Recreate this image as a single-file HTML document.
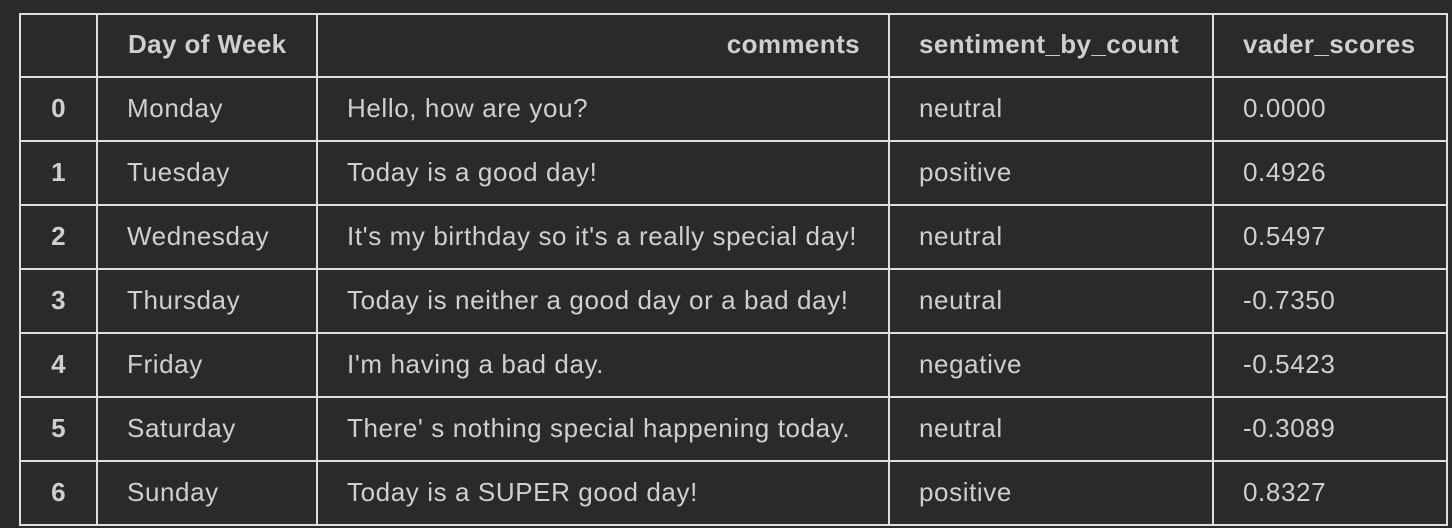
<!DOCTYPE html>
<html><head><style>
body{margin:0;background:#2a2a2a;width:1452px;height:528px;overflow:hidden;font-family:"Liberation Sans",sans-serif;color:#cfcfcf;}
.h{position:absolute;height:2px;background:#dedede;left:19px;width:1429px}
.v{position:absolute;width:2px;background:#dedede;top:13px;height:513px}
.t{position:absolute;font-size:26px;letter-spacing:0.6px;line-height:30px;white-space:nowrap}
.b{font-weight:bold;letter-spacing:0.4px}
.i{left:21px;width:75px;text-align:center}
</style></head><body>
<div class="h" style="top:13px"></div><div class="h" style="top:76px"></div><div class="h" style="top:140px"></div><div class="h" style="top:204px"></div><div class="h" style="top:268px"></div><div class="h" style="top:332px"></div><div class="h" style="top:396px"></div><div class="h" style="top:460px"></div><div class="h" style="top:524px"></div>
<div class="v" style="left:19px"></div><div class="v" style="left:96px"></div><div class="v" style="left:316px"></div><div class="v" style="left:888px"></div><div class="v" style="left:1212px"></div><div class="v" style="left:1446px"></div>
<div class="t b" style="left:128px;top:29px">Day of Week</div>
<div class="t b" style="right:592px;top:29px">comments</div>
<div class="t b" style="left:919px;top:29px">sentiment_by_count</div>
<div class="t b" style="left:1243px;top:29px">vader_scores</div>

<div class="t b i" style="top:93px">0</div><div class="t" style="left:127px;top:93px">Monday</div><div class="t" style="left:347px;top:93px">Hello, how are you?</div><div class="t" style="left:919px;top:93px">neutral</div><div class="t" style="left:1243px;top:93px">0.0000</div>
<div class="t b i" style="top:157px">1</div><div class="t" style="left:127px;top:157px">Tuesday</div><div class="t" style="left:347px;top:157px">Today is a good day!</div><div class="t" style="left:919px;top:157px">positive</div><div class="t" style="left:1243px;top:157px">0.4926</div>
<div class="t b i" style="top:221px">2</div><div class="t" style="left:127px;top:221px">Wednesday</div><div class="t" style="left:347px;top:221px">It's my birthday so it's a really special day!</div><div class="t" style="left:919px;top:221px">neutral</div><div class="t" style="left:1243px;top:221px">0.5497</div>
<div class="t b i" style="top:285px">3</div><div class="t" style="left:127px;top:285px">Thursday</div><div class="t" style="left:347px;top:285px">Today is neither a good day or a bad day!</div><div class="t" style="left:919px;top:285px">neutral</div><div class="t" style="left:1243px;top:285px">-0.7350</div>
<div class="t b i" style="top:349px">4</div><div class="t" style="left:127px;top:349px">Friday</div><div class="t" style="left:347px;top:349px">I'm having a bad day.</div><div class="t" style="left:919px;top:349px">negative</div><div class="t" style="left:1243px;top:349px">-0.5423</div>
<div class="t b i" style="top:413px">5</div><div class="t" style="left:127px;top:413px">Saturday</div><div class="t" style="left:347px;top:413px">There' s nothing special happening today.</div><div class="t" style="left:919px;top:413px">neutral</div><div class="t" style="left:1243px;top:413px">-0.3089</div>
<div class="t b i" style="top:477px">6</div><div class="t" style="left:127px;top:477px">Sunday</div><div class="t" style="left:347px;top:477px">Today is a SUPER good day!</div><div class="t" style="left:919px;top:477px">positive</div><div class="t" style="left:1243px;top:477px">0.8327</div>
</body></html>
